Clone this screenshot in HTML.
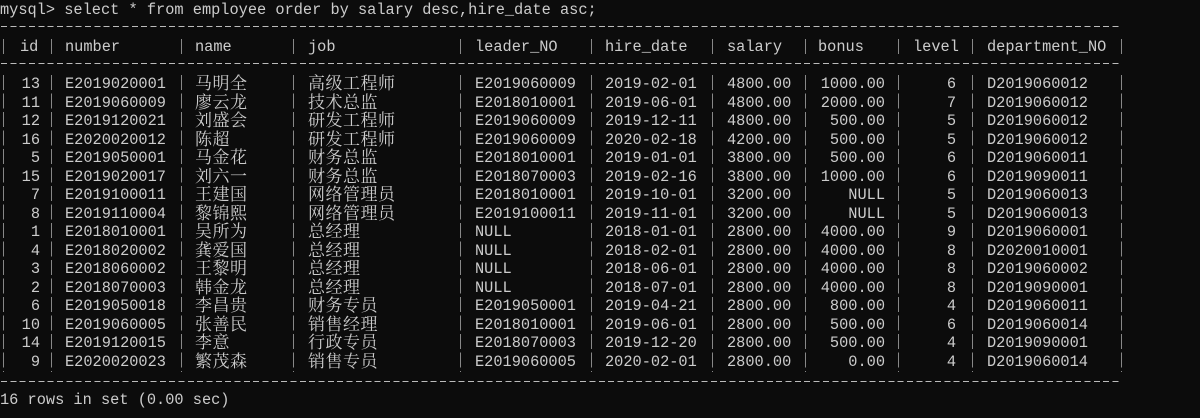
<!DOCTYPE html>
<html><head><meta charset="utf-8"><style>
body{margin:0;width:1200px;height:418px;background:#0c0c0c;overflow:hidden;position:relative;color:#cccccc;font-family:"Liberation Mono","Noto Serif CJK SC",monospace;font-size:15.3px;}
.t{position:absolute;white-space:pre;line-height:18px;}
.r{position:absolute;left:0;width:1200px;height:18px;}
.r span{position:absolute;top:0;white-space:pre;line-height:18px;}
.c0{right:1160px}.c1{left:65px}.c2{left:195px}.c3{left:308px}.c4{left:475px}.c5{left:605px}.c6{left:727px}.c7{right:315px}.c8{right:244px}.c9{left:987px}
.r span.zh{font-family:"Noto Serif CJK SC","Noto Sans CJK SC",serif;font-size:17px;letter-spacing:0.5px;top:-2px}
.h{position:absolute;height:1px;left:1px;width:1121px;background:repeating-linear-gradient(90deg,#bbb 0 6px,transparent 6px 9.34px);}
.v{position:absolute;width:1px;background:repeating-linear-gradient(180deg,#888 0 15px,transparent 15px 18.5px);}
</style></head><body>
<div class="t" style="left:0;top:1px">mysql&gt; select * from employee order by salary desc,hire_date asc;</div>

<div class="h" style="top:26px"></div>
<div class="h" style="top:63px"></div>
<div class="h" style="top:381px"></div>

<div class="v" style="left:3px;top:39px;height:18px"></div>
<div class="v" style="left:51px;top:39px;height:18px"></div>
<div class="v" style="left:181px;top:39px;height:18px"></div>
<div class="v" style="left:293px;top:39px;height:18px"></div>
<div class="v" style="left:460px;top:39px;height:18px"></div>
<div class="v" style="left:591px;top:39px;height:18px"></div>
<div class="v" style="left:712px;top:39px;height:18px"></div>
<div class="v" style="left:805px;top:39px;height:18px"></div>
<div class="v" style="left:898px;top:39px;height:18px"></div>
<div class="v" style="left:972px;top:39px;height:18px"></div>
<div class="v" style="left:1121px;top:39px;height:18px"></div>

<div class="v" style="left:3px;top:75px;height:297px"></div>
<div class="v" style="left:51px;top:75px;height:297px"></div>
<div class="v" style="left:181px;top:75px;height:297px"></div>
<div class="v" style="left:293px;top:75px;height:297px"></div>
<div class="v" style="left:460px;top:75px;height:297px"></div>
<div class="v" style="left:591px;top:75px;height:297px"></div>
<div class="v" style="left:712px;top:75px;height:297px"></div>
<div class="v" style="left:805px;top:75px;height:297px"></div>
<div class="v" style="left:898px;top:75px;height:297px"></div>
<div class="v" style="left:972px;top:75px;height:297px"></div>
<div class="v" style="left:1121px;top:75px;height:297px"></div>

<div class="r" style="top:38px"><span style="left:20px">id</span><span class="c1">number</span><span class="c2">name</span><span class="c3">job</span><span class="c4">leader_NO</span><span class="c5">hire_date</span><span class="c6">salary</span><span style="left:818px">bonus</span><span style="left:913px">level</span><span class="c9">department_NO</span></div>

<div class="r" style="top:75px"><span class="c0">13</span><span class="c1">E2019020001</span><span class="c2 zh">马明全</span><span class="c3 zh">高级工程师</span><span class="c4">E2019060009</span><span class="c5">2019-02-01</span><span class="c6">4800.00</span><span class="c7">1000.00</span><span class="c8">6</span><span class="c9">D2019060012</span></div>
<div class="r" style="top:93.5px"><span class="c0">11</span><span class="c1">E2019060009</span><span class="c2 zh">廖云龙</span><span class="c3 zh">技术总监</span><span class="c4">E2018010001</span><span class="c5">2019-06-01</span><span class="c6">4800.00</span><span class="c7">2000.00</span><span class="c8">7</span><span class="c9">D2019060012</span></div>
<div class="r" style="top:112px"><span class="c0">12</span><span class="c1">E2019120021</span><span class="c2 zh">刘盛会</span><span class="c3 zh">研发工程师</span><span class="c4">E2019060009</span><span class="c5">2019-12-11</span><span class="c6">4800.00</span><span class="c7">500.00</span><span class="c8">5</span><span class="c9">D2019060012</span></div>
<div class="r" style="top:130.5px"><span class="c0">16</span><span class="c1">E2020020012</span><span class="c2 zh">陈超</span><span class="c3 zh">研发工程师</span><span class="c4">E2019060009</span><span class="c5">2020-02-18</span><span class="c6">4200.00</span><span class="c7">500.00</span><span class="c8">5</span><span class="c9">D2019060012</span></div>
<div class="r" style="top:149px"><span class="c0">5</span><span class="c1">E2019050001</span><span class="c2 zh">马金花</span><span class="c3 zh">财务总监</span><span class="c4">E2018010001</span><span class="c5">2019-01-01</span><span class="c6">3800.00</span><span class="c7">500.00</span><span class="c8">6</span><span class="c9">D2019060011</span></div>
<div class="r" style="top:167.5px"><span class="c0">15</span><span class="c1">E2019020017</span><span class="c2 zh">刘六一</span><span class="c3 zh">财务总监</span><span class="c4">E2018070003</span><span class="c5">2019-02-16</span><span class="c6">3800.00</span><span class="c7">1000.00</span><span class="c8">6</span><span class="c9">D2019090011</span></div>
<div class="r" style="top:186px"><span class="c0">7</span><span class="c1">E2019100011</span><span class="c2 zh">王建国</span><span class="c3 zh">网络管理员</span><span class="c4">E2018010001</span><span class="c5">2019-10-01</span><span class="c6">3200.00</span><span class="c7">NULL</span><span class="c8">5</span><span class="c9">D2019060013</span></div>
<div class="r" style="top:204.5px"><span class="c0">8</span><span class="c1">E2019110004</span><span class="c2 zh">黎锦熙</span><span class="c3 zh">网络管理员</span><span class="c4">E2019100011</span><span class="c5">2019-11-01</span><span class="c6">3200.00</span><span class="c7">NULL</span><span class="c8">5</span><span class="c9">D2019060013</span></div>
<div class="r" style="top:223px"><span class="c0">1</span><span class="c1">E2018010001</span><span class="c2 zh">吴所为</span><span class="c3 zh">总经理</span><span class="c4">NULL</span><span class="c5">2018-01-01</span><span class="c6">2800.00</span><span class="c7">4000.00</span><span class="c8">9</span><span class="c9">D2019060001</span></div>
<div class="r" style="top:241.5px"><span class="c0">4</span><span class="c1">E2018020002</span><span class="c2 zh">龚爱国</span><span class="c3 zh">总经理</span><span class="c4">NULL</span><span class="c5">2018-02-01</span><span class="c6">2800.00</span><span class="c7">4000.00</span><span class="c8">8</span><span class="c9">D2020010001</span></div>
<div class="r" style="top:260px"><span class="c0">3</span><span class="c1">E2018060002</span><span class="c2 zh">王黎明</span><span class="c3 zh">总经理</span><span class="c4">NULL</span><span class="c5">2018-06-01</span><span class="c6">2800.00</span><span class="c7">4000.00</span><span class="c8">8</span><span class="c9">D2019060002</span></div>
<div class="r" style="top:278.5px"><span class="c0">2</span><span class="c1">E2018070003</span><span class="c2 zh">韩金龙</span><span class="c3 zh">总经理</span><span class="c4">NULL</span><span class="c5">2018-07-01</span><span class="c6">2800.00</span><span class="c7">4000.00</span><span class="c8">8</span><span class="c9">D2019090001</span></div>
<div class="r" style="top:297px"><span class="c0">6</span><span class="c1">E2019050018</span><span class="c2 zh">李昌贵</span><span class="c3 zh">财务专员</span><span class="c4">E2019050001</span><span class="c5">2019-04-21</span><span class="c6">2800.00</span><span class="c7">800.00</span><span class="c8">4</span><span class="c9">D2019060011</span></div>
<div class="r" style="top:315.5px"><span class="c0">10</span><span class="c1">E2019060005</span><span class="c2 zh">张善民</span><span class="c3 zh">销售经理</span><span class="c4">E2018010001</span><span class="c5">2019-06-01</span><span class="c6">2800.00</span><span class="c7">500.00</span><span class="c8">6</span><span class="c9">D2019060014</span></div>
<div class="r" style="top:334px"><span class="c0">14</span><span class="c1">E2019120015</span><span class="c2 zh">李意</span><span class="c3 zh">行政专员</span><span class="c4">E2018070003</span><span class="c5">2019-12-20</span><span class="c6">2800.00</span><span class="c7">500.00</span><span class="c8">4</span><span class="c9">D2019090001</span></div>
<div class="r" style="top:352.5px"><span class="c0">9</span><span class="c1">E2020020023</span><span class="c2 zh">繁茂森</span><span class="c3 zh">销售专员</span><span class="c4">E2019060005</span><span class="c5">2020-02-01</span><span class="c6">2800.00</span><span class="c7">0.00</span><span class="c8">4</span><span class="c9">D2019060014</span></div>

<div class="t" style="left:0;top:391px">16 rows in set (0.00 sec)</div>
</body></html>
